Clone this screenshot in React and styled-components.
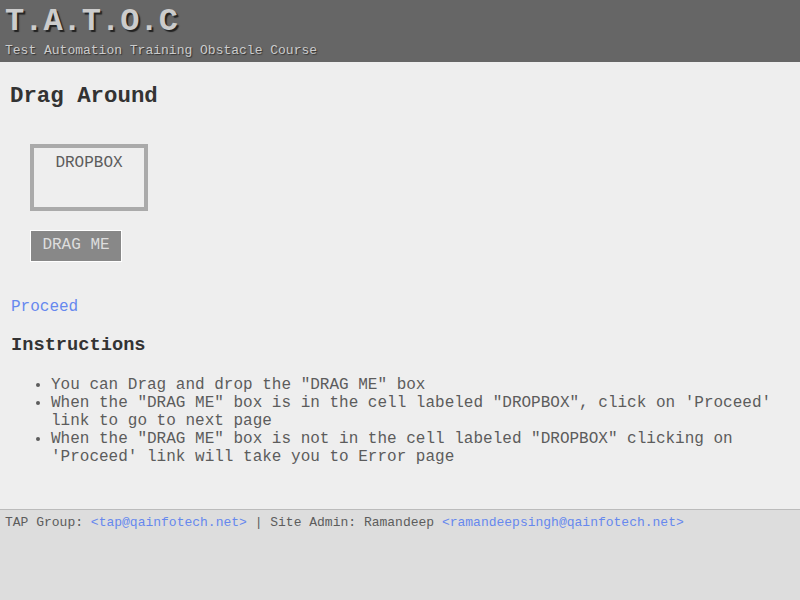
import React from 'react'
import styled, { createGlobalStyle } from 'styled-components'

const GlobalStyle = createGlobalStyle`
  html, body {
    margin: 0;
    padding: 0;
    background: #eee;
    font-family: "Liberation Mono", "Courier New", monospace;
  }
`

const Page = styled.div`
  min-height: 100vh;
  display: flex;
  flex-direction: column;
`

const Header = styled.div`
  background: #666;
  height: 62px;
  padding: 4px 5px 0;
  box-sizing: border-box;
  color: #ccc;
`

const Logo = styled.div`
  font-size: 32px;
  font-weight: bold;
  line-height: 36px;
  text-shadow: 2px 2px 1px #222;
`

const Tagline = styled.div`
  font-size: 13px;
  line-height: 16px;
  margin-top: 3px;
  text-shadow: 1px 1px 1px #333;
`

const Main = styled.div`
  padding: 0 10px;
  color: #5c5c5c;
`

const Title = styled.h2`
  font-size: 22.4px;
  line-height: 26px;
  color: #333;
  margin: 21px 0 35px;
`

const DropBox = styled.div`
  width: 110px;
  height: 53px;
  border: 4px solid #aaa;
  margin-left: 20px;
  text-align: center;
  font-size: 16px;
  line-height: 18px;
  padding-top: 6px;
`

const DragMe = styled.div`
  display: inline-block;
  margin: 19px 0 0 20px;
  width: 90px;
  height: 30px;
  line-height: 29px;
  border: 1px solid #fff;
  background: #888;
  color: #ddd;
  text-align: center;
  font-size: 16px;
`

const Proceed = styled.a`
  display: block;
  color: #6688ee;
  text-decoration: none;
  font-size: 16px;
  line-height: 18px;
  margin: 36px 0 0 1px;
`

const SubTitle = styled.h3`
  font-size: 18.7px;
  line-height: 22px;
  color: #333;
  margin: 18px 0 0 1px;
`

const List = styled.ul`
  margin: 20px 0 0;
  padding-left: 41px;
  font-size: 16px;
  line-height: 18px;
  width: 735px;
`

const Footer = styled.div`
  margin-top: 43px;
  flex: 1;
  background: #ddd;
  border-top: 1px solid #bbb;
  padding: 5px 5px;
  font-size: 13px;
  line-height: 16px;
  color: #5c5c5c;
`

const Mail = styled.a`
  color: #6688ee;
  text-decoration: none;
`

export default function App() {
  return (
    <Page>
      <GlobalStyle />
      <Header>
        <Logo>T.A.T.O.C</Logo>
        <Tagline>Test Automation Training Obstacle Course</Tagline>
      </Header>
      <Main>
        <Title>Drag Around</Title>
        <DropBox>DROPBOX</DropBox>
        <DragMe>DRAG ME</DragMe>
        <Proceed href="#">Proceed</Proceed>
        <SubTitle>Instructions</SubTitle>
        <List>
          <li>You can Drag and drop the "DRAG ME" box</li>
          <li>When the "DRAG ME" box is in the cell labeled "DROPBOX", click on 'Proceed' link to go to next page</li>
          <li>When the "DRAG ME" box is not in the cell labeled "DROPBOX" clicking on 'Proceed' link will take you to Error page</li>
        </List>
      </Main>
      <Footer>
        TAP Group: <Mail href="#">&lt;tap@qainfotech.net&gt;</Mail> | Site Admin: Ramandeep{' '}
        <Mail href="#">&lt;ramandeepsingh@qainfotech.net&gt;</Mail>
      </Footer>
    </Page>
  )
}
